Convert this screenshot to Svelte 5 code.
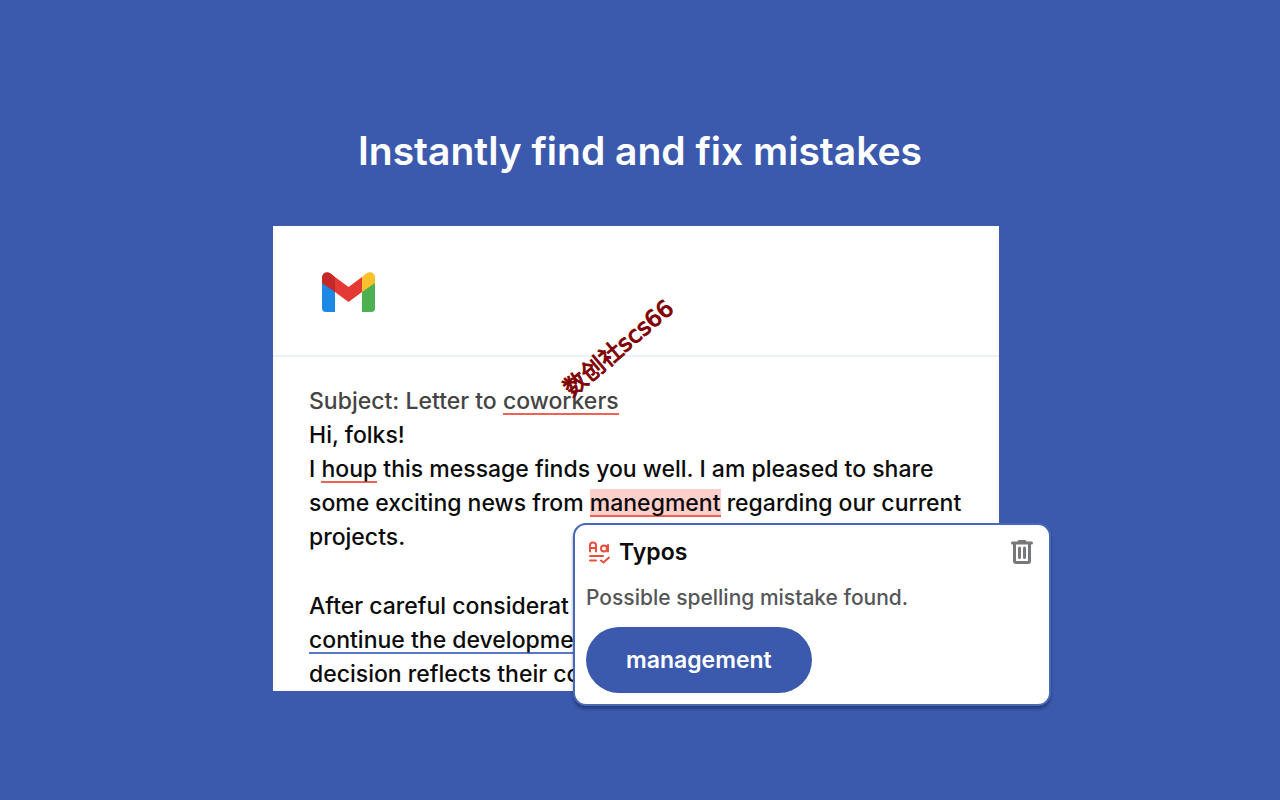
<script>
  // --- State ---
  let title = 'Instantly find and fix mistakes';

  let suggestion = {
    category: 'Typos',
    message: 'Possible spelling mistake found.',
    replacement: 'management',
  };
</script>

<main class="promo">
  <h1>{title}</h1>

  <div class="stage">
    <article class="mail">
      <header class="mail-header">
        <svg class="logo" viewBox="0 0 53 40" role="img" aria-label="Gmail">
          <path fill="#1e88e5" d="M0 9h13v31H4a4 4 0 0 1-4-4z" />
          <path fill="#4caf50" d="M40 9h13v27a4 4 0 0 1-4 4h-9z" />
          <path fill="#e53935" d="M13 5l13.500 10L40 5v15L26.500 30 13 20z" />
          <path fill="#c62828" d="M0 5.500C0 0.500 5.500-1.500 9.500 2L13 5v15L0 11z" />
          <path fill="#fbc02d" d="M53 5.500c0-5-5.500-7-9.500-3.500L40 5v15l13-9z" />
        </svg>
      </header>

      <div class="mail-body">
        <p class="subject">Subject: Letter to <span class="typo">coworkers</span></p>
        <p>
          Hi, folks!<br />
          I <span class="typo">houp</span> this message finds you well. I am pleased to share<br />
          some exciting news from <mark class="typo">manegment</mark> regarding our current<br />
          projects.
        </p>
        <p class="next">
          After careful considerat<br />
          <span class="style-issue">continue the development</span><br />
          decision reflects their co
        </p>
      </div>
    </article>

    <!-- Suggestion popup over the letter -->
    <section class="popup" aria-label="Suggestion">
      <div class="popup-head">
        <svg class="aa" viewBox="0 0 22 24" aria-hidden="true">
          <path d="M2 11.500V5.500a3 3 0 0 1 6 0v6M2 8h6" />
          <circle cx="16" cy="8.500" r="3" />
          <path d="M20 5v6.500M2 16h13M2 20.500h6M13 20.500l2.500 2 5.500-5" />
        </svg>
        <h2>{suggestion.category}</h2>
        <button class="dismiss" aria-label="Dismiss">
          <svg viewBox="0 0 22 26" aria-hidden="true">
            <path d="M1.500 4h19M3.500 4v18a1.500 1.500 0 0 0 1.500 1.500h12a1.500 1.500 0 0 0 1.500-1.500V4M8 2.500h6" />
            <path d="M8.500 9v9.500M13.500 9v9.500" />
          </svg>
        </button>
      </div>
      <p class="message">{suggestion.message}</p>
      <button class="replace">{suggestion.replacement}</button>
    </section>

    <span class="watermark">数创社scs66</span>
  </div>
</main>

<style>
  :global(body) {
    margin: 0;
    background: #3c5aad;
  }

  .promo {
    box-sizing: border-box;
    min-height: 100vh;
    padding: 123px 24px 80px;
    font-family: Inter, 'Liberation Sans', sans-serif;
    color: #0b0b0b;
  }

  h1 {
    margin: 0 0 47px;
    font-size: 39px;
    line-height: 56px;
    font-weight: 600;
    text-align: center;
    color: #fff;
  }

  .stage {
    position: relative;
    box-sizing: border-box;
    max-width: 734px;
    margin: 0 auto;
    padding-right: 8px;
  }

  .mail {
    overflow: hidden;
    background: #fff;
  }

  .mail-header {
    padding: 46px 49px 43px;
    border-bottom: 2px solid #ecf1f8;
  }

  .logo {
    display: block;
    width: 53px;
    height: 40px;
  }

  .mail-body {
    padding: 27px 24px 0 36px;
    font-size: 23px;
    line-height: 34px;
    font-weight: 500;
    white-space: nowrap;
  }

  .mail-body p {
    margin: 0;
  }

  .mail-body .subject {
    color: #444;
  }

  .mail-body .next {
    margin-top: 35px;
  }

  .typo {
    box-shadow: inset 0 -2px #ee6352;
  }

  mark {
    background: #ffd0cb;
    color: inherit;
  }

  .style-issue {
    box-shadow: inset 0 -2px #5b78c7;
  }

  .popup {
    position: absolute;
    right: -44px;
    bottom: -15px;
    box-sizing: border-box;
    width: 478px;
    padding: 11px;
    border: 2px solid #4868b8;
    border-radius: 13px;
    background: #fff;
    box-shadow: 0 3px 3px rgba(20, 35, 80, 0.5);
  }

  .popup-head {
    display: flex;
    align-items: center;
    gap: 9px;
    padding: 0 5px 0 2px;
  }

  .popup svg {
    display: block;
    fill: none;
    stroke-linecap: round;
    stroke-linejoin: round;
  }

  .aa {
    width: 22px;
    height: 24px;
    stroke: #e94f3d;
    stroke-width: 2;
  }

  h2 {
    flex: 1;
    margin: 0;
    font-size: 23px;
    line-height: 32px;
    font-weight: 600;
  }

  button {
    border: 0;
    font: inherit;
    cursor: pointer;
  }

  .dismiss {
    padding: 0;
    background: none;
  }

  .dismiss svg {
    width: 22px;
    height: 26px;
    stroke: #77787a;
    stroke-width: 3;
  }

  .message {
    margin: 14px 0 13px;
    font-size: 21px;
    line-height: 32px;
    font-weight: 500;
    color: #555659;
  }

  .replace {
    display: block;
    padding: 16px 40px;
    border-radius: 33px;
    background: #3c5aad;
    color: #fff;
    font-size: 23px;
    line-height: 34px;
    font-weight: 600;
  }

  .watermark {
    position: absolute;
    left: 278px;
    top: 104px;
    font-family: 'DejaVu Sans', 'Noto Sans CJK SC', sans-serif;
    font-size: 23px;
    line-height: 36px;
    color: #800000;
    -webkit-text-stroke: 1px #800000;
    white-space: nowrap;
    transform: rotate(-40deg);
  }
</style>
